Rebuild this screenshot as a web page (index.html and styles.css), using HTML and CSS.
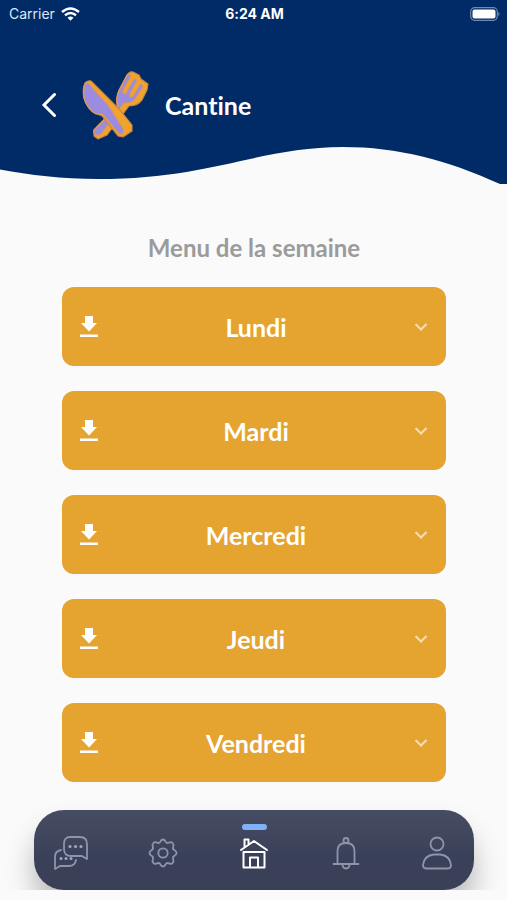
FILE: index.html
```html
<!DOCTYPE html>
<html lang="fr">
<head>
<meta charset="utf-8">
<meta name="viewport" content="width=device-width, initial-scale=1">
<title>Cantine</title>
<link rel="stylesheet" href="styles.css">
</head>
<body>
<svg class="sprite" aria-hidden="true">
  <symbol id="download" viewBox="0 0 18 22"><path d="M5 0h8v7h4L9 15.500 1 7h4z"/><path d="M0 18.500h18V21H0z"/></symbol>
  <symbol id="chevron" viewBox="0 0 14 10"><path d="M1.500 2l5.500 5.500L12.500 2"/></symbol>
</svg>
<div class="app">
  <header class="header">
    <svg class="wave" viewBox="0 0 507 184" preserveAspectRatio="none" aria-hidden="true">
      <path d="M0 0H507V184H500C447 160 398 147 343 147C259 147 211 179 98 179C62 179 30 175 0 169.500Z"/>
    </svg>
    <div class="status">
      <div class="carrier">
        <span>Carrier</span>
        <svg width="19" height="14" viewBox="0 0 19 14" fill="none" stroke="#fff" stroke-width="2.500" aria-hidden="true">
          <path d="M1 5Q9.500-2 18 5"/><path d="M4 8.300Q9.500 3.700 15 8.300"/><path d="M6.500 10.800Q9.500 8.300 12.500 10.800L9.500 13.800Z" fill="#fff" stroke="none"/>
        </svg>
      </div>
      <div class="time">6:24 AM</div>
      <svg class="battery" width="30" height="14" viewBox="0 0 30 14" aria-hidden="true">
        <rect x=".7" y=".7" width="26.600" height="12.600" rx="4" fill="none" stroke="#6f88b0" stroke-width="1.200"/>
        <rect x="2.500" y="2.500" width="23" height="9" rx="2" fill="#fff"/>
        <path d="M28.300 5Q31 7 28.300 9Z" fill="#6f88b0"/>
      </svg>
    </div>
    <div class="title-row">
      <button class="back" aria-label="Retour">
        <svg width="16" height="26" viewBox="0 0 16 26" aria-hidden="true"><path d="M14.500 2.500L4 13l10.500 10.500"/></svg>
      </button>
      <svg class="cutlery" width="68" height="70" viewBox="0 0 68 70" aria-hidden="true">
        <g stroke-linejoin="round" stroke-linecap="round">
          <path d="M12 60L35 36Q34 28 37 20L44 7Q47 1 51 2L57 5L59 9L66 14L65 20L60 30Q56 36 47 36L25 65L16 69L12 66Z" fill="#f0a42e" stroke="#c88345" stroke-width="1.200"/>
          <path d="M12 60L36 36Q33 28 37 21L45 5Q48 3 49 6L41 21Q41 25 44 23L51 10Q54 7 55 11L48 24Q48 28 51 26L58 14Q61 13 61 17L54 28Q50 34 42 33L22 60Q19 67 14 65Q11 64 12 60Z" fill="#9c8cdf" stroke="#e39a4d" stroke-width="1.200"/>
          <path d="M3 13Q5 10 9 11L38 40L50 55L50 61L41 67L36 66L20 46L13 43Q5 38 2 28Q0 19 3 13Z" fill="#f0a42e" stroke="#c88345" stroke-width="1.200"/>
          <path d="M3 14Q6 11 10 17L27 36L42 60Q42 65 37 64L20 44H14Q5 39 2 28Q1 19 3 14Z" fill="#9c8cdf" stroke="#e39a4d" stroke-width="1.200"/>
        </g>
      </svg>
      <h1>Cantine</h1>
    </div>
  </header>

  <main class="menu">
    <h2>Menu de la semaine</h2>
    <section class="day">
      <button class="download" aria-label="Télécharger le menu de lundi"><svg><use href="#download"/></svg></button>
      <button class="toggle" aria-expanded="false"><span>Lundi</span><svg><use href="#chevron"/></svg></button>
    </section>
    <section class="day">
      <button class="download" aria-label="Télécharger le menu de mardi"><svg><use href="#download"/></svg></button>
      <button class="toggle" aria-expanded="false"><span>Mardi</span><svg><use href="#chevron"/></svg></button>
    </section>
    <section class="day">
      <button class="download" aria-label="Télécharger le menu de mercredi"><svg><use href="#download"/></svg></button>
      <button class="toggle" aria-expanded="false"><span>Mercredi</span><svg><use href="#chevron"/></svg></button>
    </section>
    <section class="day">
      <button class="download" aria-label="Télécharger le menu de jeudi"><svg><use href="#download"/></svg></button>
      <button class="toggle" aria-expanded="false"><span>Jeudi</span><svg><use href="#chevron"/></svg></button>
    </section>
    <section class="day">
      <button class="download" aria-label="Télécharger le menu de vendredi"><svg><use href="#download"/></svg></button>
      <button class="toggle" aria-expanded="false"><span>Vendredi</span><svg><use href="#chevron"/></svg></button>
    </section>
  </main>

  <footer class="dock">
    <nav class="tabs" aria-label="Navigation principale">
      <button class="tab" aria-label="Messages">
        <svg viewBox="0 0 36 36" aria-hidden="true">
          <path d="M17 2H27Q34 2 34 9V24L29 21H18Q11 21 11 14V9Q11 2 17 2Z"/>
          <path d="M8 15Q2 16 2 22V34L7 31H16Q22 31 23 25"/>
          <g class="dots"><circle cx="17" cy="11.500" r="1.600"/><circle cx="22.500" cy="11.500" r="1.600"/><circle cx="28" cy="11.500" r="1.600"/><circle cx="8" cy="23.500" r="1.500"/><circle cx="13" cy="23.500" r="1.500"/><circle cx="18" cy="23.500" r="1.500"/></g>
        </svg>
      </button>
      <button class="tab" aria-label="Réglages">
        <svg viewBox="0 0 36 36" aria-hidden="true">
          <path d="M18 4.500Q19.500 4.500 20.500 6.500Q21.500 8.700 24 7.600Q26.500 6.500 27.600 8Q29 9.500 28.200 11.800Q27.300 14.200 29.500 15.200Q31.500 16.200 31.500 18Q31.500 19.800 29.500 20.800Q27.300 21.800 28.200 24.200Q29 26.500 27.600 28Q26.500 29.500 24 28.400Q21.500 27.300 20.500 29.500Q19.500 31.500 18 31.500Q16.500 31.500 15.500 29.500Q14.500 27.300 12 28.400Q9.500 29.500 8.400 28Q7 26.500 7.800 24.200Q8.700 21.800 6.500 20.800Q4.500 19.800 4.500 18Q4.500 16.200 6.500 15.200Q8.700 14.200 7.800 11.800Q7 9.500 8.400 8Q9.500 6.500 12 7.600Q14.500 8.700 15.500 6.500Q16.500 4.500 18 4.500Z"/>
          <circle cx="18" cy="18" r="4.700"/>
        </svg>
      </button>
      <button class="tab active" aria-label="Accueil" aria-current="page">
        <svg viewBox="0 0 36 36" aria-hidden="true">
          <path d="M5 15L18 6L31 15M8.500 12V4.500H12.500V9M7.500 17H28.500V32.500H7.500ZM14 32V22.500H22V32"/>
        </svg>
      </button>
      <button class="tab" aria-label="Notifications">
        <svg viewBox="0 0 36 36" aria-hidden="true">
          <path d="M5.500 29H30.500M9.500 29V16Q9.500 8 18 8Q26.500 8 26.500 16V29M14.500 29Q14.500 33.500 18 33.500Q21.500 33.500 21.500 29"/>
          <circle cx="18" cy="5.500" r="2.500"/>
        </svg>
      </button>
      <button class="tab" aria-label="Profil">
        <svg viewBox="0 0 36 36" aria-hidden="true">
          <circle cx="18" cy="9" r="6.500"/>
          <path d="M15 19.500H21Q31 20.500 32 30Q32 33.500 29 33.500H7Q4 33.500 4 30Q5 20.500 15 19.500Z"/>
        </svg>
      </button>
    </nav>
  </footer>
</div>
</body>
</html>
```
FILE: styles.css
```css
* {
  box-sizing: border-box;
}

body {
  margin: 0;
  background: #fafafa;
  font-family: Lato, sans-serif;
  font-variant-ligatures: none;
}

button {
  padding: 0;
  border: 0;
  background: none;
  color: inherit;
  font: inherit;
  cursor: pointer;
}

h1,
h2 {
  margin: 0;
  font-weight: 700;
  line-height: 32px;
}

h1 {
  font-size: 25px;
}

h2 {
  font-size: 24px;
}

.sprite {
  display: none;
}

.app {
  display: flex;
  flex-direction: column;
  min-height: 100vh;
}

.header {
  position: relative;
  padding-bottom: 40px;
  color: #fff;
}

.wave {
  position: absolute;
  inset: 0;
  z-index: -1;
  width: 100%;
  height: 100%;
  fill: #002b66;
}

.status {
  display: grid;
  grid-template-columns: 1fr auto 1fr;
  align-items: center;
  height: 27px;
  padding: 0 7px 0 9px;
  font-family: Inter, sans-serif;
  font-size: 14px;
}

.carrier {
  display: flex;
  align-items: center;
  gap: 6px;
  color: #dfe7f3;
}

.time {
  font-weight: 700;
}

.battery {
  justify-self: end;
}

.title-row {
  display: flex;
  align-items: center;
  height: 117px;
  padding: 38px 40px 0;
}

.back {
  display: flex;
}

.back svg {
  fill: none;
  stroke: #fff;
  stroke-width: 3;
  stroke-linecap: round;
}

.cutlery {
  margin: 0 15px 0 26px;
}

.menu {
  display: flex;
  flex-direction: column;
  gap: 25px;
  padding: 48px 61px 0 62px;
}

.menu h2 {
  margin-bottom: -2px;
  color: #9b9b9b;
  text-align: center;
}

.day {
  display: grid;
  grid-template-columns: 54px 1fr;
  height: 79px;
  border-radius: 12px;
  background: #e5a330;
  color: #fff;
}

.download {
  display: grid;
  place-items: center;
}

.download svg {
  width: 18px;
  height: 22px;
  fill: #fff;
}

.toggle {
  display: grid;
  grid-template-columns: 1fr 50px;
  align-items: center;
  justify-items: center;
  font-size: 25px;
  font-weight: 700;
  line-height: 32px;
}

.toggle svg {
  width: 14px;
  height: 10px;
  fill: none;
  stroke: #f7dfb4;
  stroke-width: 2;
}

.dock {
  margin: auto 0 10px;
  padding: 28px 33px 0 34px;
  overflow: hidden;
}

.tabs {
  display: flex;
  justify-content: space-between;
  height: 80px;
  padding: 0 19px;
  border-radius: 30px;
  background: linear-gradient(#464d62, #394059 60%, #394057);
  box-shadow: 0 20px 28px rgb(0 0 0 / 26%);
}

.tab {
  position: relative;
  display: grid;
  place-items: center;
  width: 36px;
  padding-top: 6px;
}

.tab svg {
  width: 36px;
  height: 36px;
  fill: none;
  stroke: #8e94aa;
  stroke-width: 1.8;
  stroke-linejoin: round;
  stroke-linecap: round;
}

.tab .dots {
  fill: #a1a6b8;
  stroke: none;
}

.tab.active svg {
  stroke: #fff;
  stroke-width: 2;
}

.tab.active::before {
  content: "";
  position: absolute;
  top: 14px;
  left: 50%;
  width: 25px;
  height: 6px;
  margin-left: -12px;
  border-radius: 3px;
  background: #80b0fa;
}
```
